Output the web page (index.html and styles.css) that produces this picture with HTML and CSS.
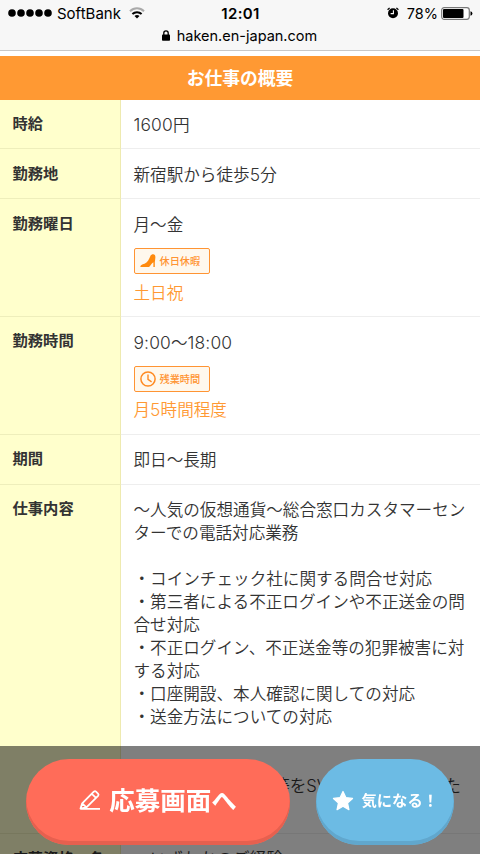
FILE: index.html
```html
<!DOCTYPE html>
<html lang="ja">
<head>
<meta charset="utf-8">
<title>お仕事の概要</title>
<link rel="stylesheet" href="styles.css">
</head>
<body>
<header class="browser">
  <div class="status">
    <div class="carrier">
      <svg class="signal" width="44" height="10" viewBox="0 0 44 10"><circle cx="4" cy="5" r="3.8"/><circle cx="13" cy="5" r="3.8"/><circle cx="22" cy="5" r="3.8"/><circle cx="31" cy="5" r="3.8"/><circle cx="40" cy="5" r="3.8"/></svg>
      <span class="carrier-name">SoftBank</span>
      <svg class="wifi" width="16" height="12" viewBox="0 0 16 12" fill="none" stroke="#000" stroke-width="2"><path d="M1 4.2C5 .2 11 .2 15 4.2" stroke="#aaa"/><path d="M3.4 7C6 4.5 10 4.5 12.6 7"/><path d="M8 11.5 5.5 9C7 7.7 9 7.7 10.5 9Z" fill="#000" stroke="none"/></svg>
    </div>
    <span class="time">12:01</span>
    <div class="power">
      <svg class="alarm" width="12" height="12" viewBox="0 0 12 12"><circle cx="6" cy="6.3" r="5"/><path d="M.6 2.8 2.6 .9M9.4 .9l2 1.9" stroke="#000" stroke-width="1.3"/><path d="M6.4 3.2v3.4H3.6" fill="none" stroke="#fff" stroke-width="1.1"/></svg>
      <span class="percent">78%</span>
      <svg class="battery" width="32" height="13" viewBox="0 0 32 13"><rect x=".7" y=".7" width="27.6" height="11.6" rx="2.5" fill="#fff" stroke="#777" stroke-width="1.2"/><rect x="2" y="2" width="20.5" height="9" rx="1"/><path d="M29.5 4.2Q31.4 4.6 31.4 6.5T29.5 8.8Z"/></svg>
    </div>
  </div>
  <div class="address">
    <svg width="8" height="11" viewBox="0 0 8 11"><rect y="4.6" width="8" height="6.2" rx=".8"/><path d="M1.8 5V3a2.2 2.2 0 0 1 4.4 0v2" fill="none" stroke="#000" stroke-width="1.3"/></svg>
    <span>haken.en-japan.com</span>
  </div>
</header>
<main>
  <h1>お仕事の概要</h1>
  <dl>
    <dt>時給</dt><dd><span class="num">1600</span>円</dd>
    <dt>勤務地</dt><dd>新宿駅から徒歩<span class="num">5</span>分</dd>
    <dt>勤務曜日</dt>
    <dd>月〜金
      <div class="tag"><svg width="16" height="16" viewBox="0 0 16 16"><path d="M.3 14C.3 12.2 2 11.4 4.5 10.8C7.5 9.5 9 6.4 10.3 3.2C11 1.4 13.8.6 15 2.2C15.9 4.2 15 6.8 14.8 9V14H13.4V9.2C12 9.8 11 12.1 9.6 13.4Q9 14 8 14Z"/></svg><span>休日休暇</span></div>
      <p class="extra">土日祝</p>
    </dd>
    <dt>勤務時間</dt>
    <dd><span class="num">9:00</span>〜<span class="num">18:00</span>
      <div class="tag"><svg width="16" height="16" viewBox="0 0 16 16"><path d="M8 3.6v4.8l3.6 2.4" fill="none" stroke="#ff8a22" stroke-width="1.4"/><circle cx="8" cy="8" r="7.1" fill="none" stroke="#ff8a22" stroke-width="1.5"/></svg><span>残業時間</span></div>
      <p class="extra">月<span class="num">5</span>時間程度</p>
    </dd>
    <dt>期間</dt><dd>即日〜長期</dd>
    <dt>仕事内容</dt>
    <dd>〜人気の仮想通貨〜総合窓口カスタマーセン<br>ターでの電話対応業務<br><br>・コインチェック社に関する問合せ対応<br>・第三者による不正ログインや不正送金の問<br>合せ対応<br>・不正ログイン、不正送金等の犯罪被害に対<br>する対応<br>・口座開設、本人確認に関しての対応<br>・送金方法についての対応<br><br><br>※&nbsp; &nbsp;顧客の電話内容等をSVに報告いただいた<br><br></dd>
    <dt class="last">応募資格・条件</dt><dd class="last">・いずれかのご経験</dd>
  </dl>
</main>
<footer class="actions">
  <a class="button apply"><svg width="22" height="22" viewBox="0 0 22 22" fill="none" stroke="#fff" stroke-width="1.8" stroke-linejoin="round"><path d="M1.5 19.6 3.2 14.4 14.8 2.7Q16 1.7 17 2.6L19.2 4.8Q20 5.6 19.1 6.8L7.4 18.3ZM3.2 14.4 7.4 18.3M12.8 4.8 17 8.8M1.5 19.8H21"/></svg><span>応募画面へ</span></a>
  <a class="button keep"><svg width="22" height="21" viewBox="0 0 22 21"><path d="M11 1.5 13.8 7.6 20.5 8.4 15.5 13 16.9 19.6 11 16.2 5.1 19.6 6.5 13 1.5 8.4 8.2 7.6Z" fill="#fff" stroke="#fff" stroke-width="1.3" stroke-linejoin="round"/></svg><span>気になる！</span></a>
</footer>
</body>
</html>
```
FILE: styles.css
```css
* { box-sizing: border-box; }
html, body { height: 100%; }
body {
  margin: 0;
  overflow: hidden;
  background: #fff;
  color: #333;
  font-family: "Noto Sans CJK JP", sans-serif;
}
.browser {
  height: 51px;
  background: #f7f7f7;
  border-bottom: 1px solid #c8c8c8;
  color: #000;
  font-family: Inter, sans-serif;
}
.status {
  display: grid;
  grid-template-columns: 1fr auto 1fr;
  align-items: center;
  height: 26px;
  padding: 0 7px 0 8px;
}
.carrier, .power { display: flex; align-items: center; }
.carrier-name { margin: 0 8px 0 5px; font-size: 15px; }
.time { font-size: 15px; font-weight: 600; letter-spacing: .4px; }
.power { justify-content: flex-end; }
.percent { margin: 0 3px 0 8px; font-size: 14.5px; }
.address {
  display: flex;
  justify-content: center;
  align-items: center;
  gap: 7px;
  height: 18px;
  padding-right: 1px;
  font-size: 14.5px;
}
main { height: 803px; overflow: hidden; padding-top: 5px; }
h1 {
  height: 43.5px;
  margin: 0;
  background: #ff9933;
  color: #fff;
  font-size: 17.8px;
  font-weight: 700;
  line-height: 43px;
  text-align: center;
}
dl {
  display: grid;
  grid-template-columns: 121px 1fr;
  margin: 0;
}
dt, dd { margin: 0; padding: 14.4px 13px 11.6px 12.5px; }
dt {
  padding-top: 11.3px;
  background: #ffffcc;
  border-right: 1px solid #eeeab0;
  border-bottom: 1px solid #eeeebb;
  font-size: 15.3px;
  font-weight: 700;
  line-height: 23px;
}
dd {
  border-bottom: 1px solid #eee;
  font-family: Inter, "Noto Sans CJK JP", sans-serif;
  font-size: 16.6px;
  font-weight: 350;
  line-height: 23px;
  white-space: nowrap;
}
.num { font-size: 17.4px; letter-spacing: .15px; line-height: 1; }
dt.last { padding-top: 12.5px; }
.tag {
  display: flex;
  align-items: center;
  gap: 4px;
  width: 76px;
  height: 26px;
  margin-top: 11px;
  padding-left: 5px;
  border: 1px solid #ff9433;
  border-radius: 2px;
  background: #fff8ed;
  color: #ff9433;
  font-size: 10.2px;
  font-weight: 500;
}
.tag span { padding-top: 1px; }
.tag svg { fill: #ff8a0d; }
.extra { margin: 7.7px 0 0; color: #ff9933; }
.actions {
  position: fixed;
  inset: auto 0 0;
  display: flex;
  gap: 25.5px;
  height: 108px;
  padding: 13px 26px 9px;
  background: rgba(0, 0, 0, .5);
}
.button {
  display: flex;
  align-items: center;
  justify-content: center;
  height: 86px;
  padding-bottom: 4px;
  border-radius: 43px;
  color: #fff;
  font-weight: 700;
  white-space: nowrap;
}
.button span { margin-top: -3px; }
.apply {
  gap: 8px;
  width: 264px;
  background: #ff6c59;
  box-shadow: inset 0 -4px #e6604f;
  font-size: 25.5px;
}
.keep {
  gap: 8px;
  width: 138.5px;
  background: #6cbbe4;
  box-shadow: inset 0 -4px #61a7cd;
  font-size: 15.3px;
}
```
